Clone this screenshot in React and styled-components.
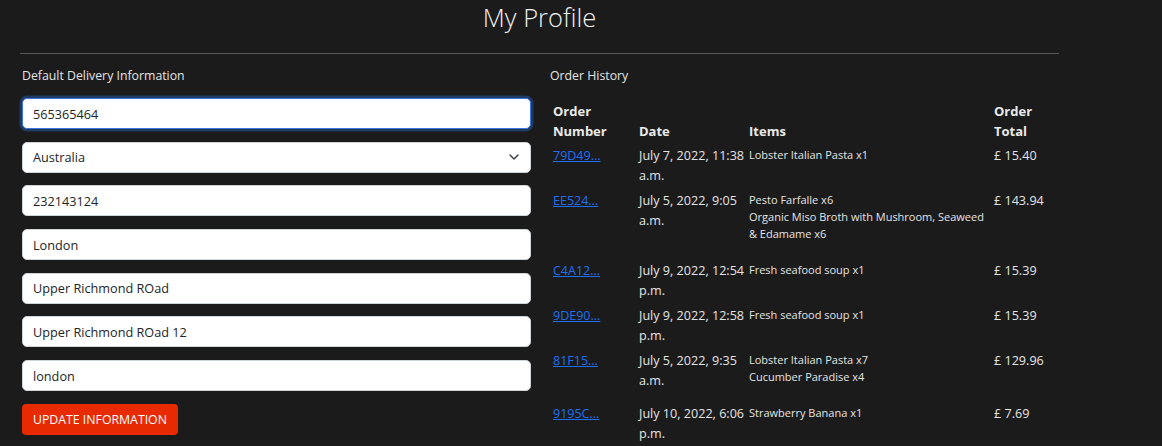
import React from "react";
import styled, { createGlobalStyle } from "styled-components";

const GlobalStyle = createGlobalStyle`
  html, body { margin: 0; padding: 0; background: #1b1b1b; }
  body {
    font-family: "Open Sans", "Noto Sans", "Liberation Sans", sans-serif;
    color: #e4e4e4;
    -webkit-font-smoothing: antialiased;
  }
  * { box-sizing: border-box; }
`;

const Page = styled.div`
  width: 1059px;
  padding-left: 20px;
`;

const Title = styled.h1`
  margin: 0;
  padding-top: 2px;
  font-size: 25.5px;
  line-height: 30px;
  font-weight: 300;
  text-align: center;
  color: #f0f0f0;
  margin-bottom: 21px;
`;

const Divider = styled.hr`
  margin: 0;
  border: 0;
  border-top: 1px solid #575757;
`;

const Columns = styled.div`
  display: grid;
  grid-template-columns: 509px 509px;
  column-gap: 19px;
  padding-left: 2px;
  padding-top: 12px;
`;

const SectionTitle = styled.h2`
  margin: 0 0 12px;
  font-size: 12.3px;
  line-height: 20px;
  font-weight: 400;
  color: #e4e4e4;
`;

const Form = styled.form`
  display: flex;
  flex-direction: column;
  gap: 12.7px;
  align-items: flex-start;
`;

const Field = styled.input`
  width: 100%;
  height: 31px;
  padding: 0 10px;
  border-radius: 5px;
  border: 1px solid ${(p) => (p.$focused ? "#3e73d8" : "#ced4da")};
  box-shadow: ${(p) => (p.$focused ? "0 0 0 2.5px #1f3a64" : "none")};
  background: #fff;
  color: #212529;
  font-family: inherit;
  font-size: 12.7px;
  outline: none;
`;

const SelectWrap = styled.div`
  position: relative;
  width: 100%;
`;

const Select = styled.select`
  width: 100%;
  height: 31px;
  padding: 0 30px 0 10px;
  border-radius: 5px;
  border: 1px solid #ced4da;
  background: #fff;
  color: #212529;
  font-family: inherit;
  font-size: 12.7px;
  appearance: none;
  -webkit-appearance: none;
  outline: none;
`;

const Chevron = styled.svg`
  position: absolute;
  right: 12px;
  top: 11px;
  width: 10px;
  height: 8px;
  pointer-events: none;
`;

const Button = styled.button`
  height: 31px;
  padding: 0 11px;
  border: 0;
  border-radius: 4px;
  background: #e82a00;
  color: #fff;
  font-family: inherit;
  font-size: 12.3px;
  text-transform: uppercase;
  cursor: pointer;
`;

const Table = styled.table`
  width: 509px;
  border-collapse: collapse;
  table-layout: fixed;
`;

const Th = styled.th`
  text-align: left;
  vertical-align: bottom;
  padding: 3px;
  font-size: 13px;
  line-height: 20px;
  font-weight: 700;
  color: #eaeaea;
`;

const Td = styled.td`
  vertical-align: top;
  padding: 2px 3px 3px;
  font-size: ${(p) => (p.$small ? "11px" : "12.6px")};
  line-height: ${(p) => (p.$small ? "17px" : "20px")};
  color: #e4e4e4;
`;

const OrderLink = styled.a`
  color: #1f6ff2;
  text-decoration: underline;
  font-size: 12.5px;
`;

const NoWrap = styled.span`
  white-space: nowrap;
`;

const ItemList = styled.div`
  margin-bottom: 14px;
`;

const Item = styled.div``;

const fields = [
  "232143124",
  "London",
  "Upper Richmond ROad",
  "Upper Richmond ROad 12",
  "london",
];

const orders = [
  { id: "79D49...", date: "July 7, 2022, 11:38", ampm: "a.m.", items: ["Lobster Italian Pasta x1"], total: "£ 15.40" },
  { id: "EE524...", date: "July 5, 2022, 9:05", ampm: "a.m.", items: ["Pesto Farfalle x6", "Organic Miso Broth with Mushroom, Seaweed & Edamame x6"], total: "£ 143.94" },
  { id: "C4A12...", date: "July 9, 2022, 12:54", ampm: "p.m.", items: ["Fresh seafood soup x1"], total: "£ 15.39" },
  { id: "9DE90...", date: "July 9, 2022, 12:58", ampm: "p.m.", items: ["Fresh seafood soup x1"], total: "£ 15.39" },
  { id: "81F15...", date: "July 5, 2022, 9:35", ampm: "a.m.", items: ["Lobster Italian Pasta x7", "Cucumber Paradise x4"], total: "£ 129.96" },
  { id: "9195C...", date: "July 10, 2022, 6:06", ampm: "p.m.", items: ["Strawberry Banana x1"], total: "£ 7.69" },
];

export default function App() {
  return (
    <Page>
      <GlobalStyle />
      <Title>My Profile</Title>
      <Divider />
      <Columns>
        <section>
          <SectionTitle>Default Delivery Information</SectionTitle>
          <Form onSubmit={(e) => e.preventDefault()}>
            <Field $focused defaultValue="565365464" />
            <SelectWrap>
              <Select defaultValue="Australia">
                <option>Australia</option>
                <option>United Kingdom</option>
              </Select>
              <Chevron viewBox="0 0 10 8">
                <path d="M1 2l4 4 4-4" fill="none" stroke="#343a40" strokeWidth="1.4" strokeLinecap="round" strokeLinejoin="round" />
              </Chevron>
            </SelectWrap>
            {fields.map((v) => (
              <Field key={v} defaultValue={v} />
            ))}
            <Button type="submit">Update Information</Button>
          </Form>
        </section>
        <section>
          <SectionTitle>Order History</SectionTitle>
          <Table>
            <colgroup>
              <col style={{ width: 86 }} />
              <col style={{ width: 110 }} />
              <col style={{ width: 245 }} />
              <col style={{ width: 68 }} />
            </colgroup>
            <thead>
              <tr>
                <Th>Order Number</Th>
                <Th>Date</Th>
                <Th>Items</Th>
                <Th>Order Total</Th>
              </tr>
            </thead>
            <tbody>
              {orders.map((o) => (
                <tr key={o.id}>
                  <Td>
                    <OrderLink href="#">{o.id}</OrderLink>
                  </Td>
                  <Td>
                    <NoWrap>{o.date}</NoWrap> {o.ampm}
                  </Td>
                  <Td $small>
                    <ItemList>
                      {o.items.map((it) => (
                        <Item key={it}>{it}</Item>
                      ))}
                    </ItemList>
                  </Td>
                  <Td>{o.total}</Td>
                </tr>
              ))}
            </tbody>
          </Table>
        </section>
      </Columns>
    </Page>
  );
}
